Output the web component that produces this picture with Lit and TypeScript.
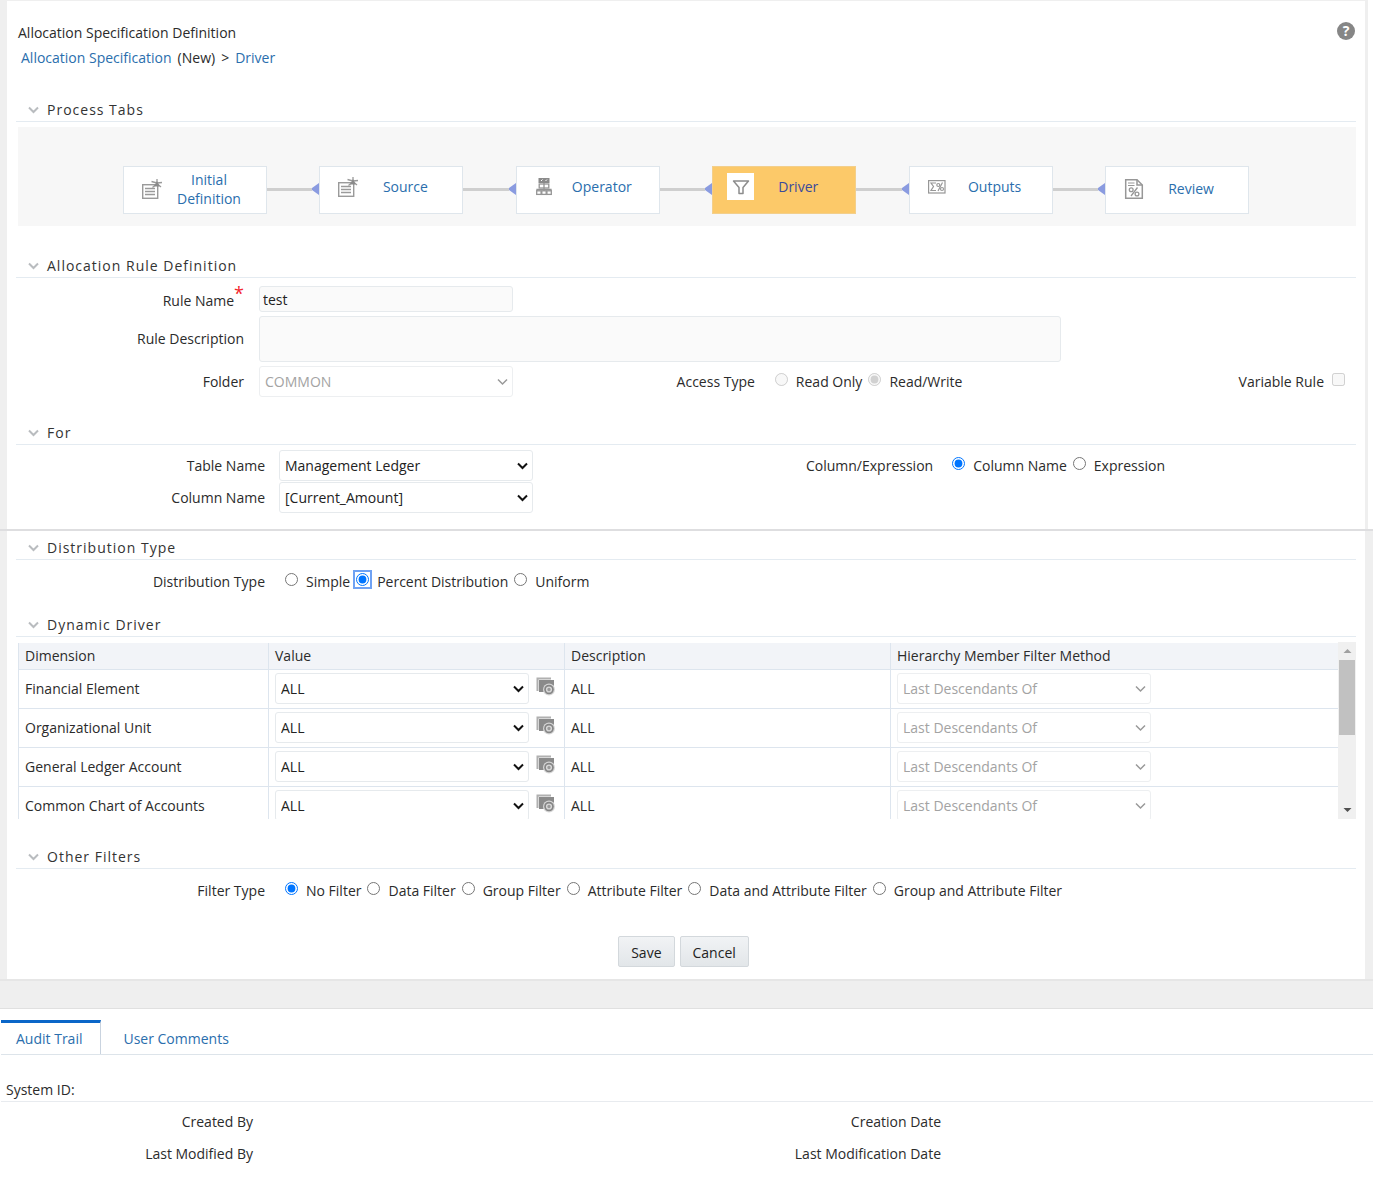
import { LitElement, html, css, svg, nothing, type TemplateResult } from "lit";
import { customElement, property, state } from "lit/decorators.js";
import { classMap } from "lit/directives/class-map.js";

const chevron = svg`<path d="M1 1.5 L5.5 6 L10 1.5" fill="none" stroke="currentColor"/>`;

/* Step icons, drawn in a 22 x 22 box. */
const notePad = svg`
  <g fill="none" stroke="#9a9a9a">
    <rect x="1.7" y="6.7" width="15" height="13.6" stroke-width="1.4"/>
    <path d="M4 10.5H14M4 13.5H14M4 16.5H14" stroke-width="1.3"/>
    <path d="M16 1V7M16 5L10.5 3.5M16 5L21 4.5M15.5 6L11.5 9.5M16.5 6L20 9" stroke-width="1.3"/>
  </g>
  <path d="M16 3L18.5 8.5H13Z" fill="#8a8a8a"/>`;

const hierarchy = svg`
  <rect x="5.5" y="2" width="11" height="5" fill="#8a8a8a"/>
  <path d="M8 5L9.5 3.5M12.5 5L14 3.5" stroke="#fff"/>
  <g fill="none" stroke="#959595" stroke-width="1.3">
    <path d="M11 7V15M4 15V13.5H18V15"/>
    <rect x="6.2" y="8" width="9.6" height="4"/>
    <rect x="3.7" y="14.8" width="4.4" height="3.6"/>
    <rect x="8.8" y="14.8" width="4.4" height="3.6"/>
    <rect x="13.9" y="14.8" width="4.4" height="3.6"/>
  </g>`;

const funnel = svg`
  <path d="M3.5 5H18.5L13 11.5V17.5H9V11.5Z" fill="none" stroke="#8c8c8c" stroke-width="1.5" stroke-linejoin="round"/>`;

const sumPercent = svg`
  <g fill="none" stroke="#979797" stroke-width="1.2">
    <rect x="2.6" y="4.6" width="16.4" height="12.4"/>
    <path d="M10 7H5L7.5 10.5L5 14.5H10"/>
    <path d="M16.5 6.5L12 15"/>
    <circle cx="12.3" cy="9" r="1.5"/>
    <circle cx="16" cy="13" r="1.5"/>
  </g>`;

const percentPage = svg`
  <g fill="none" stroke="#979797" stroke-width="1.5">
    <path d="M2.7 1.7H14L19.3 7V20.3H2.7Z"/>
    <path d="M14 1.7V7H19.3"/>
    <path d="M5 5H11.5M5 7.5H11.5" stroke-width="1.1"/>
    <path d="M14.5 9.5L8 18" stroke-width="1.3"/>
    <circle cx="8.2" cy="11.8" r="1.9" stroke-width="1.3"/>
    <circle cx="14" cy="16" r="1.9" stroke-width="1.3"/>
  </g>`;

interface Step {
  label: string;
  icon: TemplateResult<2>;
  centered?: boolean;
}

const STEPS: Step[] = [
  { label: "Initial Definition", icon: notePad, centered: true },
  { label: "Source", icon: notePad },
  { label: "Operator", icon: hierarchy },
  { label: "Driver", icon: funnel },
  { label: "Outputs", icon: sumPercent },
  { label: "Review", icon: percentPage, centered: true },
];

const DIMENSIONS = [
  "Financial Element",
  "Organizational Unit",
  "General Ledger Account",
  "Common Chart of Accounts",
];

@customElement("section-panel")
export class SectionPanel extends LitElement {
  @property() heading = "";
  @state() private open = true;

  static styles = css`
    :host {
      display: block;
    }
    .head {
      display: flex;
      height: 23px;
      border-bottom: 1px solid #e4ebf1;
      margin: 0;
      font-size: 14px;
      font-weight: 400;
    }
    .toggle {
      display: flex;
      align-items: center;
      gap: 8px;
      padding: 0 0 0 12px;
      border: 0;
      background: none;
      color: #333;
      font: inherit;
      letter-spacing: 1px;
      cursor: pointer;
    }
    .arrow {
      width: 11px;
      height: 8px;
      color: #b9bcbf;
      stroke-width: 2px;
    }
  `;

  render() {
    return html`
      <h2 class="head">
        <button
          class="toggle"
          type="button"
          aria-expanded=${this.open ? "true" : "false"}
          @click=${() => (this.open = !this.open)}
        >
          <svg class="arrow" viewBox="0 0 11 8" aria-hidden="true">${chevron}</svg>${this.heading}
        </button>
      </h2>
      ${this.open ? html`<slot></slot>` : nothing}
    `;
  }
}

@customElement("app-root")
export class AppRoot extends LitElement {
  @state() private tab = 0;

  static styles = css`
    :host {
      display: block;
      min-height: 100vh;
      background: #fff;
      color: #2b2b2b;
      font-family: "Open Sans", "Noto Sans", sans-serif;
      font-size: 14px;
      line-height: 20px;
    }
    * {
      box-sizing: border-box;
    }
    a {
      color: #2a6ead;
      text-decoration: none;
    }
    .upper {
      margin-right: 19px;
      border: solid #efefef;
      border-width: 1px 3px 0 7px;
      padding: 21px 9px 16px;
    }
    .lower {
      margin-right: 14px;
      border: solid #efefef;
      border-width: 0 8px 0 7px;
      padding: 5px 9px 12px;
    }
    .seam {
      height: 2px;
      margin-right: 14px;
      background: #dedee0;
    }
    .foot {
      height: 30px;
      margin-right: 14px;
      border-top: 2px solid #e6e6e6;
      border-bottom: 1px solid #e0e0e0;
      background: #efefef;
    }
    .top {
      display: flex;
      justify-content: space-between;
      align-items: flex-start;
      margin-bottom: 30px;
      padding-right: 1px;
    }
    .title {
      margin: 1px 0 5px 2px;
      font-size: 14px;
      font-weight: 400;
    }
    .crumbs {
      display: flex;
      gap: 6px;
      padding-left: 5px;
    }
    .help {
      width: 18px;
      height: 18px;
      padding: 0;
      border: 0;
      border-radius: 50%;
      background: #868686;
      color: #fff;
      font: 700 14px/18px "Open Sans", sans-serif;
    }
    .steps {
      display: flex;
      margin: 5px 0 28px 2px;
      padding: 39px 107px 12px 105px;
      background: #f7f7f7;
    }
    .step {
      display: grid;
      grid-template-columns: 50px 70px;
      align-items: center;
      width: 144px;
      height: 48px;
      padding-bottom: 3px;
      border: 1px solid #dfe6ec;
      background: #fff;
      line-height: 19px;
      text-align: center;
    }
    .step.raised {
      padding-bottom: 7px;
    }
    .step.current {
      border-color: #f3cf8b;
      background: #fcc969;
      color: #3a4a9c;
    }
    .glyph {
      display: flex;
      justify-content: center;
      align-items: center;
      width: 27px;
      height: 27px;
      margin-left: 14px;
      background: #fff;
    }
    .glyph svg {
      width: 22px;
      height: 22px;
    }
    .link {
      display: flex;
      flex: 1;
      align-items: center;
      height: 46px;
    }
    .link svg {
      width: 7px;
      height: 12px;
    }
    .wire {
      flex: 1;
      height: 3px;
      background: #cfcfcf;
    }
    .form {
      display: grid;
      align-items: center;
      column-gap: 15px;
    }
    .rule {
      grid-template-columns: 228px 254px 1fr 2fr auto;
      row-gap: 4px;
      padding: 8px 11px 24px 0;
    }
    .target {
      grid-template-columns: 249px 254px 17fr 18fr;
      column-gap: 14px;
      row-gap: 1px;
      padding-top: 5px;
    }
    .single {
      grid-template-columns: 249px 1fr;
      min-height: 53px;
      padding-bottom: 9px;
    }
    .filters {
      min-height: 67px;
      padding-bottom: 23px;
    }
    .label {
      text-align: right;
    }
    .star {
      color: #f3262d;
      font-size: 18px;
      line-height: 10px;
    }
    .text,
    .area,
    .pick {
      width: 100%;
      border: 1px solid #e6eaed;
      border-radius: 3px;
      background: #fff;
      color: #222;
      font: inherit;
    }
    .text {
      height: 26px;
      padding: 0 3px;
      background: #fafafa;
    }
    .wide {
      grid-column: 2 / 5;
    }
    .area {
      display: block;
      max-width: 802px;
      height: 46px;
      resize: none;
      background: #fafafa;
    }
    .drop {
      display: grid;
      align-items: center;
    }
    .pick {
      grid-area: 1 / 1;
      height: 31px;
      padding: 0 24px 0 5px;
      appearance: none;
    }
    .pick:disabled {
      border-color: #edeff1;
      color: #a3a3a3;
      opacity: 1;
    }
    .caret {
      grid-area: 1 / 1;
      justify-self: end;
      width: 11px;
      height: 8px;
      margin-right: 5px;
      color: #111;
      stroke-width: 2px;
      pointer-events: none;
    }
    .pick:disabled + .caret {
      color: #999;
      stroke-width: 1.5px;
    }
    .radios {
      display: flex;
      flex-wrap: wrap;
      gap: 6px;
      padding-left: 5px;
    }
    .choice {
      display: flex;
      align-items: flex-start;
      gap: 8px;
      white-space: nowrap;
    }
    .choice input {
      width: 13px;
      height: 13px;
      margin: 1px 0 0;
    }
    .choice .marked {
      outline: 2px solid #6fa2f3;
      outline-offset: 1px;
    }
    .grid {
      display: flex;
      height: 177px;
      margin: 5px 0 26px 2px;
      overflow: hidden;
    }
    .scroll {
      flex: 1;
      overflow: hidden;
      padding-top: 1px;
    }
    .dims {
      width: 100%;
      table-layout: fixed;
      border-collapse: collapse;
    }
    .dims th,
    .dims td {
      padding: 0 6px;
      border: 1px solid #dde5ee;
      border-top: 0;
      border-right: 0;
      font-weight: 400;
      text-align: left;
    }
    .dims th {
      height: 26px;
      background: #f2f4f8;
    }
    .dims td {
      height: 39px;
    }
    .c1 {
      width: 250px;
    }
    .c2 {
      width: 296px;
    }
    .c3 {
      width: 326px;
    }
    .cell {
      display: grid;
      grid-template-columns: 254px auto;
      align-items: center;
      gap: 7px;
    }
    .browse {
      width: 19px;
      height: 23px;
      padding: 0 0 4px;
      border: 0;
      background: none;
    }
    .browse svg {
      display: block;
      width: 19px;
      height: 19px;
    }
    .bar {
      display: flex;
      flex-direction: column;
      align-items: center;
      width: 18px;
      background: #f0f0f0;
    }
    .bar svg {
      width: 9px;
      height: 18px;
    }
    .thumb {
      width: 16px;
      height: 75px;
      margin-bottom: auto;
      background: #c1c1c1;
    }
    .actions {
      display: flex;
      justify-content: center;
      gap: 5px;
      padding-right: 5px;
    }
    .btn {
      height: 31px;
      padding: 3px 12px 0;
      border: 1px solid #d3d8dc;
      border-radius: 2px;
      background: linear-gradient(#f1f3f5, #e2e6e9);
      color: #222;
      font: inherit;
    }
    .tabs {
      display: flex;
      margin: 11px 14px 0 1px;
      border-bottom: 1px solid #dde4ea;
    }
    .tab {
      height: 34px;
      padding: 4px 22px 0;
      border: 0;
      background: none;
      color: #2a6ead;
      font: inherit;
    }
    .tab.on {
      padding: 0 18px 0 15px;
      border-top: 3px solid #0a66c8;
      border-right: 1px solid #c9d3df;
    }
    .system {
      margin: 25px 14px 0 1px;
      padding: 0 5px 1px;
      border-bottom: 1px solid #e8ebef;
    }
    .audit {
      display: grid;
      grid-template-columns: 1fr 1fr;
      gap: 12px 4px;
      margin: 10px 14px 0 1px;
    }
    .audit .label {
      width: 252px;
    }
  `;

  private drop(id: string, value: string, disabled = false, name?: string) {
    return html`<span class="drop">
      <select class="pick" id=${id} ?disabled=${disabled} aria-label=${name ?? nothing}>
        <option>${value}</option>
      </select>
      <svg class="caret" viewBox="0 0 11 8" aria-hidden="true">${chevron}</svg>
    </span>`;
  }

  private radios(
    name: string,
    options: string[],
    checked: number,
    { disabled = false, marked = false } = {},
  ) {
    return html`<div class="radios" role="radiogroup" aria-labelledby=${name}>
      ${options.map(
        (text, i) => html`<label class="choice">
          <input
            class=${classMap({ marked: marked && i === checked })}
            type="radio"
            name=${name}
            .checked=${i === checked}
            ?disabled=${disabled}
          />${text}</label
        >`,
      )}
    </div>`;
  }

  private step(s: Step, i: number) {
    const cls = { step: true, raised: !s.centered, current: s.label === "Driver" };
    return html`
      ${i
        ? html`<span class="link" aria-hidden="true">
            <span class="wire"></span>
            <svg viewBox="0 0 7 12"><path d="M7 0V12L0 7V5Z" fill="#8a9be0" /></svg>
          </span>`
        : nothing}
      <a class=${classMap(cls)} href="#">
        <span class="glyph"><svg viewBox="0 0 22 22" aria-hidden="true">${s.icon}</svg></span>
        <span>${s.label}</span>
      </a>
    `;
  }

  private row(name: string, i: number) {
    return html`<tr>
      <td>${name}</td>
      <td>
        <div class="cell">
          ${this.drop(`value-${i}`, "ALL", false, `${name} value`)}
          <button class="browse" type="button" aria-label="Browse ${name}">
            <svg viewBox="0 0 19 19">
              <path d="M1.5 14V1.5H15" fill="none" stroke="#b0b0b0" stroke-width="2" />
              <path d="M3 3H18V15H3Z" fill="#8a8a8a" />
              <circle cx="13" cy="12.5" r="6" fill="#d6d6d6" />
              <circle cx="13" cy="12.5" r="4.8" fill="#858585" />
              <circle cx="13" cy="12.5" r="2.4" fill="#9a9a9a" stroke="#d8d8d8" stroke-width="1.4" />
            </svg>
          </button>
        </div>
      </td>
      <td>ALL</td>
      <td><div class="cell">${this.drop(`method-${i}`, "Last Descendants Of", true, `${name} filter method`)}</div></td>
    </tr>`;
  }

  render() {
    return html`
      <main>
        <div class="upper">
          <header class="top">
            <div>
              <h1 class="title">Allocation Specification Definition</h1>
              <nav class="crumbs">
                <a href="#">Allocation Specification</a><span>(New)</span><span>&gt;</span><a href="#">Driver</a>
              </nav>
            </div>
            <button class="help" type="button" aria-label="Help">?</button>
          </header>

          <section-panel heading="Process Tabs">
            <nav class="steps">${STEPS.map((s, i) => this.step(s, i))}</nav>
          </section-panel>

          <section-panel heading="Allocation Rule Definition">
            <div class="form rule">
              <label class="label" for="name">Rule Name<sup class="star">*</sup></label>
              <input class="text" id="name" type="text" value="test" />
              <span></span><span></span><span></span>
              <label class="label" for="description">Rule Description</label>
              <div class="wide"><textarea class="area" id="description"></textarea></div>
              <span></span>
              <label class="label" for="folder">Folder</label>
              ${this.drop("folder", "COMMON", true)}
              <span class="label" id="access">Access Type</span>
              ${this.radios("access", ["Read Only", "Read/Write"], 1, { disabled: true })}
              <label class="choice">Variable Rule<input type="checkbox" disabled /></label>
            </div>
          </section-panel>

          <section-panel heading="For">
            <div class="form target">
              <label class="label" for="table">Table Name</label>
              ${this.drop("table", "Management Ledger")}
              <span class="label" id="kind">Column/Expression</span>
              ${this.radios("kind", ["Column Name", "Expression"], 0)}
              <label class="label" for="column">Column Name</label>
              ${this.drop("column", "[Current_Amount]")}
            </div>
          </section-panel>
        </div>

        <div class="seam"></div>

        <div class="lower">
          <section-panel heading="Distribution Type">
            <div class="form single">
              <span class="label" id="distribution">Distribution Type</span>
              ${this.radios("distribution", ["Simple", "Percent Distribution", "Uniform"], 1, { marked: true })}
            </div>
          </section-panel>

          <section-panel heading="Dynamic Driver">
            <div class="grid">
              <div class="scroll">
                <table class="dims">
                  <thead>
                    <tr>
                      <th class="c1">Dimension</th>
                      <th class="c2">Value</th>
                      <th class="c3">Description</th>
                      <th>Hierarchy Member Filter Method</th>
                    </tr>
                  </thead>
                  <tbody>
                    ${DIMENSIONS.map((d, i) => this.row(d, i))}
                  </tbody>
                </table>
              </div>
              <div class="bar" aria-hidden="true">
                <svg viewBox="0 0 9 18"><path d="M0.5 11H8.5L4.5 7Z" fill="#a0a0a0" /></svg>
                <span class="thumb"></span>
                <svg viewBox="0 0 9 18"><path d="M0.5 7H8.5L4.5 11Z" fill="#505050" /></svg>
              </div>
            </div>
          </section-panel>

          <section-panel heading="Other Filters">
            <div class="form single filters">
              <span class="label" id="filter">Filter Type</span>
              ${this.radios(
                "filter",
                [
                  "No Filter",
                  "Data Filter",
                  "Group Filter",
                  "Attribute Filter",
                  "Data and Attribute Filter",
                  "Group and Attribute Filter",
                ],
                0,
              )}
            </div>
          </section-panel>

          <div class="actions">
            <button class="btn" type="button">Save</button>
            <button class="btn" type="button">Cancel</button>
          </div>
        </div>
        <div class="foot"></div>
      </main>

      <div class="tabs" role="tablist">
        ${["Audit Trail", "User Comments"].map(
          (t, i) => html`<button
            class=${classMap({ tab: true, on: this.tab === i })}
            role="tab"
            type="button"
            aria-selected=${this.tab === i ? "true" : "false"}
            @click=${() => (this.tab = i)}
          >
            ${t}
          </button>`,
        )}
      </div>
      <div class="system">System ID:</div>
      <div class="audit">
        <div class="label">Created By</div>
        <div class="label">Creation Date</div>
        <div class="label">Last Modified By</div>
        <div class="label">Last Modification Date</div>
      </div>
    `;
  }
}
